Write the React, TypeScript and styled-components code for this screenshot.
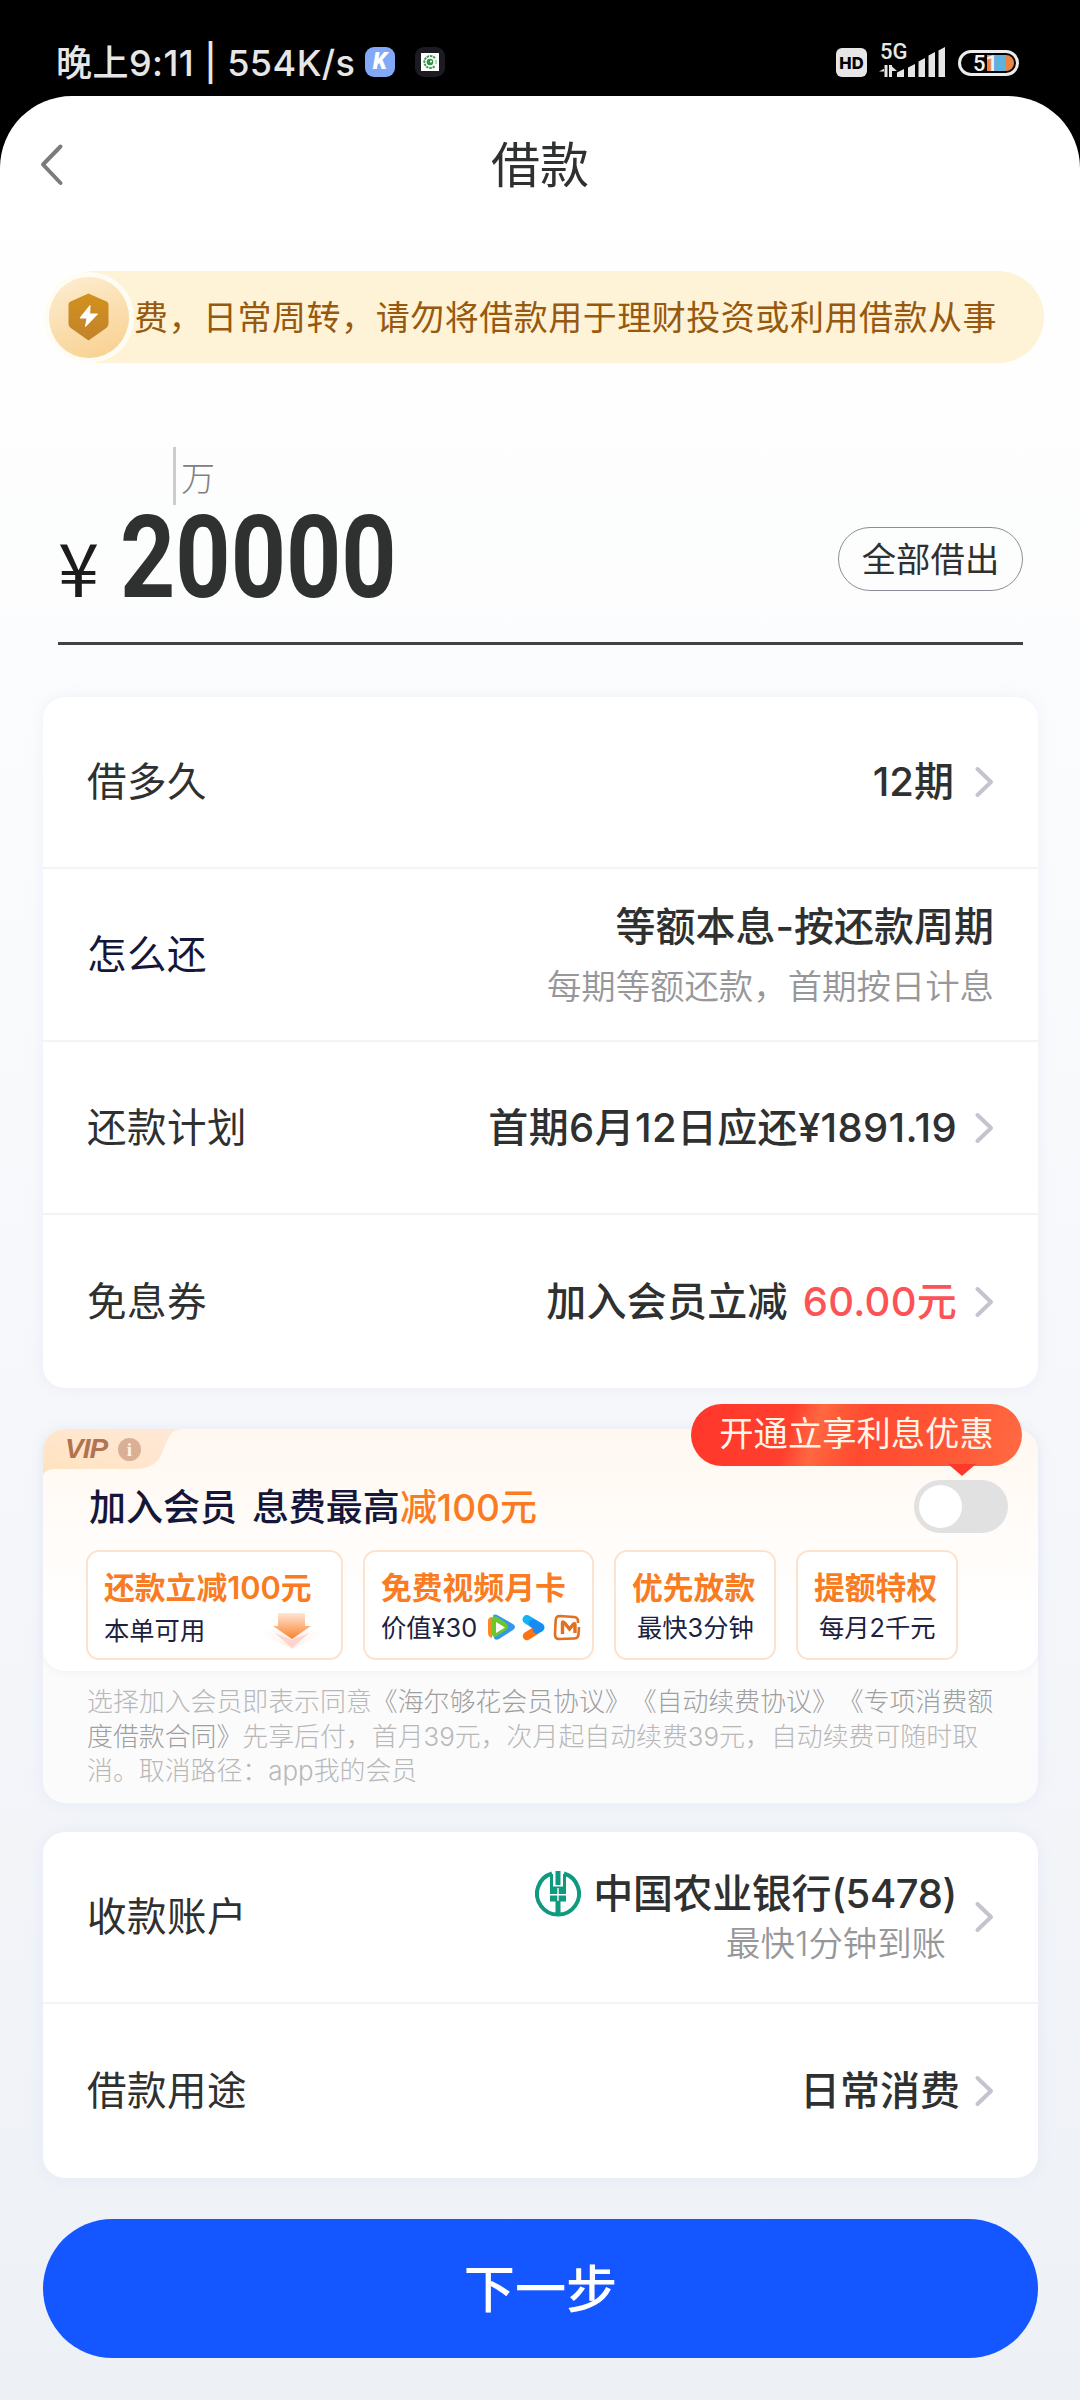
import React from 'react';
import styled, { createGlobalStyle } from 'styled-components';

const GlobalStyle = createGlobalStyle`
  * { box-sizing: border-box; }
  body {
    margin: 0;
    background: #000;
    font-family: Inter, "Noto Sans CJK SC", sans-serif;
    color: #2f3030;
    text-spacing-trim: space-all;
  }
`;

const Screen = styled.div`
  width: 1080px;
  height: 2400px;
  display: flex;
  flex-direction: column;
  overflow: hidden;
`;

const StatusBar = styled.div`
  height: 96px;
  flex: none;
  display: flex;
  align-items: center;
  justify-content: space-between;
  padding: 30px 61px 0 56px;
  color: #e6e6e6;
`;

const StatusGroup = styled.div<{ $gap: number }>`
  display: flex;
  align-items: center;
  gap: ${(p) => p.$gap}px;
`;

const Clock = styled.span`
  width: 299px;
  font-size: 36px;
  line-height: 44px;
  font-weight: 500;
  letter-spacing: 0.45px;
  white-space: pre;
  margin-right: 10px;
`;

const AppBadge = styled.span<{ $bg: string }>`
  width: 30px;
  height: 30px;
  margin-top: -2px;
  border-radius: 9px;
  background: ${(p) => p.$bg};
  display: flex;
  align-items: center;
  justify-content: center;
  color: #fff;
  font: italic 900 23px/30px Roboto, sans-serif;
`;

const HdBadge = styled.span`
  width: 31px;
  height: 29px;
  margin-top: -2px;
  border-radius: 6px;
  background: #e6e6e6;
  color: #000;
  font: 800 16.5px/30px Inter, sans-serif;
  text-align: center;
`;

const Network = styled.div`
  width: 67px;
  height: 40px;
  position: relative;
  margin-top: -7px;
`;

const NetworkLabel = styled.span`
  position: absolute;
  left: 1px;
  top: 0;
  font: 500 22px/24px Roboto, sans-serif;
`;

const Sheet = styled.main`
  flex: 1;
  border-radius: 72px 72px 0 0;
  background: linear-gradient(180deg, #ffffff 0%, #fefefe 12%, #fbfcfd 26%, #f7f8fb 52%, #f1f3f8 84%, #edf1f6 100%);
  display: flex;
  flex-direction: column;
`;

const Header = styled.header`
  height: 138px;
  display: grid;
  grid-template-columns: 108px 1fr 108px;
  align-items: center;
`;

const BackIcon = styled.svg`
  margin-left: 39px;
`;

const Title = styled.h1`
  margin: 2px 0 0;
  text-align: center;
  font-size: 49px;
  font-weight: 400;
  line-height: 60px;
`;

const Notice = styled.div`
  margin: 37px 36px 0 49px;
  height: 92px;
  border-radius: 46px;
  background: #fef3d6;
  display: flex;
  align-items: center;
  gap: 5px;
  color: #97590f;
  font-size: 34px;
  line-height: 50px;
  letter-spacing: 0.52px;
  white-space: nowrap;
`;

const NoticeText = styled.span`
  margin-top: 1px;
`;

const NoticeIcon = styled.div`
  width: 80px;
  height: 81px;
  flex: none;
  border-radius: 50%;
  background: linear-gradient(160deg, #fdeed3, #f8cf8c);
  box-shadow: 0 0 0 5px #fffcf4;
  display: flex;
  align-items: center;
  justify-content: center;
`;

const AmountSection = styled.section`
  margin: 84px 57px 0 58px;
  border-bottom: 3px solid #414145;
  height: 198px;
`;

const UnitHint = styled.div`
  margin-left: 115px;
  width: 60px;
  height: 58px;
  border-left: 3px solid #cccccc;
  padding: 12px 0 0 5px;
  font: 300 34px/36px "Noto Sans CJK SC", sans-serif;
  color: #808080;
`;

const AmountRow = styled.div`
  display: flex;
  justify-content: space-between;
`;

const Amount = styled.div`
  display: flex;
  align-items: baseline;
  line-height: 106px;
`;

const Currency = styled.span`
  width: 62px;
  font-family: "Noto Sans CJK SC", sans-serif;
  font-size: 74px;
  color: #1c1c1c;
`;

const Digits = styled.span`
  font-family: Roboto, sans-serif;
  font-size: 115.5px;
  font-weight: 700;
  transform: scaleX(0.835);
  transform-origin: left;
`;

const AllButton = styled.button`
  margin: 22px 0 0;
  width: 185px;
  height: 64px;
  border: 1.5px solid #8d8d97;
  border-radius: 32px;
  background: transparent;
  color: #2f3030;
  font: 400 34.4px/62px Inter, "Noto Sans CJK SC", sans-serif;
  padding: 1px 0 0;
`;

const Card = styled.section<{ $top: number }>`
  margin: ${(p) => p.$top}px 42px 0 43px;
  border-radius: 22px;
  background: #fff;
  box-shadow: 0 0 16px rgba(190, 205, 235, 0.22);
  flex: none;
`;

const Row = styled.div<{ $h: number }>`
  height: ${(p) => p.$h}px;
  display: flex;
  align-items: center;
  padding: 0 44px 0 44px;
  border-bottom: 2px solid #f3f4f6;
  &:last-child { border-bottom: 0; }
`;

const Label = styled.span<{ $color?: string }>`
  font-size: 39.5px;
  line-height: 56px;
  letter-spacing: 0.5px;
  color: ${(p) => p.$color || '#2f3030'};
`;

const Values = styled.div`
  margin-left: auto;
  display: flex;
  flex-direction: column;
  align-items: flex-end;
`;

const Value = styled.div<{ $ls?: number }>`
  display: flex;
  align-items: center;
  font-size: 40px;
  line-height: 56px;
  font-weight: 500;
  white-space: pre;
  letter-spacing: ${(p) => p.$ls || 0}px;
`;

const Red = styled.span`
  color: #fb5356;
  margin-left: 15px;
`;

const Sub = styled.div<{ $mr?: number; $mt?: number }>`
  font-size: 34.4px;
  line-height: 48px;
  color: #97979a;
  margin-top: ${(p) => p.$mt || 0}px;
  margin-right: ${(p) => p.$mr || 0}px;
  font-weight: 350;
`;

const ChevronIcon = styled.svg<{ $gap: number }>`
  margin-left: ${(p) => p.$gap}px;
  flex: none;
`;

const VipCard = styled(Card)`
  position: relative;
  height: 374px;
  background: #fbfbfc;
`;

const VipTop = styled.div`
  height: 242px;
  border-radius: 22px;
  background: linear-gradient(180deg, #fff8f1 0%, #fffdfb 55%, #ffffff 75%);
  box-shadow: 0 2px 6px rgba(200, 205, 220, 0.18);
  overflow: hidden;
`;

const VipTag = styled.div`
  position: relative;
  width: 144px;
  height: 46px;
  padding: 0 0 6px 22px;
  display: flex;
  align-items: center;
  gap: 9px;
`;

const TagShape = styled.svg`
  position: absolute;
  left: 0;
  top: 0;
`;

const VipText = styled.span`
  position: relative;
  width: 44px;
  color: #b27352;
  font: italic 800 28px/40px "Liberation Sans", sans-serif;
  letter-spacing: -1px;
`;

const Info = styled.span`
  position: relative;
  width: 23px;
  height: 23px;
  border-radius: 50%;
  background: #d9af96;
  color: #fff2e6;
  font: 700 19px/23px "Liberation Serif", serif;
  text-align: center;
`;

const VipHead = styled.div`
  display: flex;
  justify-content: space-between;
  align-items: center;
  height: 62px;
  padding: 2px 30px 0 46px;
`;

const VipTitle = styled.h2`
  margin: 2px 0 0;
  font-size: 37px;
  line-height: 50px;
  font-weight: 500;
  color: #14173a;
  white-space: pre;
  word-spacing: 5px;
`;

const Orange = styled.span`
  color: #f97c22;
`;

const Toggle = styled.div`
  width: 94px;
  height: 53px;
  margin-top: -1px;
  border-radius: 27px;
  background: #e1e1e1;
  padding: 5px;
`;

const Knob = styled.div`
  width: 43px;
  height: 43px;
  border-radius: 50%;
  background: #fff;
`;

const Benefits = styled.div`
  display: flex;
  gap: 20px;
  padding: 13px 0 0 43px;
`;

const Benefit = styled.div<{ $w: number }>`
  width: ${(p) => p.$w}px;
  height: 110px;
  border: 2px solid #fbe3d0;
  border-radius: 13px;
  background: #fff;
  padding: 15px 0 0 16px;
  white-space: nowrap;
`;

const BenefitTitle = styled.div`
  font-size: 30.8px;
  line-height: 42px;
  font-weight: 600;
  color: #f97c22;
`;

const BenefitSub = styled.div<{ $drop?: boolean; $indent?: number }>`
  display: flex;
  align-items: center;
  height: 36px;
  font-size: 25.3px;
  line-height: 36px;
  color: #1d2140;
  margin-top: ${(p) => (p.$drop ? 4 : 1)}px;
  padding-left: ${(p) => p.$indent || 0}px;
`;

const ArrowIcon = styled.svg`
  margin-left: 46px;
`;

const VideoIcons = styled.svg`
  margin-left: auto;
  margin-right: 9px;
`;

const Terms = styled.p`
  margin: 14px 0 0;
  padding: 0 0 0 44px;
  font-size: 25.9px;
  line-height: 34.6px;
  font-weight: 300;
  color: #b8b8b8;
  white-space: pre;
`;

const TermLink = styled.span`
  color: #9f9f9f;
`;

const Bubble = styled.div`
  position: absolute;
  right: 16px;
  top: -25px;
  width: 331px;
  height: 62px;
  border-radius: 31px;
  background: linear-gradient(105deg, #ff372b 0%, #ff3f2e 30%, #ff6840 38%, #ff5a37 44%, #ff4a31 52%, #ff5635 75%, #ff6b44 100%);
  color: #fff5e8;
  font-size: 34.3px;
  line-height: 60px;
  text-align: center;
  &::after {
    content: '';
    position: absolute;
    right: 46px;
    top: 60px;
    border: 14px solid transparent;
    border-top: 12px solid #fb3a2c;
    border-bottom: 0;
  }
`;

const BankLogo = styled.svg`
  margin-right: 12px;
`;

const NextButton = styled.button`
  margin: 41px 42px 0 43px;
  height: 139px;
  flex: none;
  border: 0;
  border-radius: 70px;
  background: #1456ff;
  color: #fff;
  font: 500 51.2px/138px Inter, "Noto Sans CJK SC", sans-serif;
  padding: 1px 0 0;
`;

const Chevron = ({ gap = 17 }: { gap?: number }) => (
  <ChevronIcon $gap={gap} width="20" height="34" viewBox="0 0 20 34" fill="none">
    <path d="M3.5 4 L17 17 L3.5 30" stroke="#c4c4cf" strokeWidth="4" strokeLinecap="round" strokeLinejoin="round" />
  </ChevronIcon>
);

const Status = () => (
  <StatusBar>
    <StatusGroup $gap={0}>
      <Clock>晚上9:11 | 554K/s</Clock>
      <StatusGroup $gap={20}>
        <AppBadge $bg="#82a8f8">K</AppBadge>
        <AppBadge $bg="#1c1b22">
          <svg width="18" height="18" viewBox="0 0 18 18">
            <rect width="18" height="18" fill="#fff" />
            <path d="M14 5.2A6 6 0 1 0 14 12.8" fill="none" stroke="#3d9a50" strokeWidth="2" strokeDasharray="2.4 0.8" />
            <circle cx="9" cy="9" r="3.3" fill="#2f9347" />
            <circle cx="10" cy="8.5" r="1.1" fill="#fff" />
            <path d="M15 7v4" stroke="#9dceaa" strokeWidth="1.5" />
          </svg>
        </AppBadge>
      </StatusGroup>
    </StatusGroup>
    <StatusGroup $gap={12}>
      <HdBadge>HD</HdBadge>
      <Network>
        <NetworkLabel>5G</NetworkLabel>
        <svg width="67" height="40" viewBox="0 0 67 40" fill="#e6e6e6">
          <path d="M5.5 25h3v12h-3zM0 31.5l6 0v-3.2l-6 3.2zM10 25h3v12h-3zM13 26.5l5 4.5h-5z" />
          <path d="M18 37v-4.500l7-3.500v8zM29 37v-9.500l7-3.500v13zM39.500 37v-15.500l6.500-3.500v19zM49.500 37v-21.500l6.500-3.500v25zM59.500 37v-26.500l6.500-3.500v30z" />
        </svg>
      </Network>
      <svg width="61" height="26" viewBox="0 0 61 26">
        <rect x="1.500" y="1.500" width="58" height="23" rx="11.500" fill="#000" stroke="#ececec" strokeWidth="3" />
        <path d="M29 5h19a8 8 0 0 1 0 16H29z" fill="#ec8440" />
        <rect x="33" y="5" width="15" height="16" fill="#5fb2dc" />
        <text x="15" y="21" fontFamily="Roboto" fontSize="22" fontWeight="500" fill="#f2f2f2">51</text>
      </svg>
    </StatusGroup>
  </StatusBar>
);

export default function App() {
  return (
    <Screen>
      <GlobalStyle />
      <Status />
      <Sheet>
        <Header>
          <BackIcon width="26" height="44" viewBox="0 0 26 44" fill="none">
            <path d="M21.500 3.500 L4 21.500 L21.500 40" stroke="#7b7b7b" strokeWidth="4" strokeLinecap="round" strokeLinejoin="round" />
          </BackIcon>
          <Title>借款</Title>
        </Header>

        <Notice>
          <NoticeIcon>
            <svg width="42" height="48" viewBox="0 0 42 48">
              <defs>
                <linearGradient id="shield" x1="0" y1="0" x2="0" y2="1">
                  <stop offset="0" stopColor="#d2921c" />
                  <stop offset="1" stopColor="#c2822c" />
                </linearGradient>
              </defs>
              <path d="M20.500 .5 38.500 8.500q2 1 2 3V30q0 3.500-3 5.500L20.500 47.500 3.500 35.500q-3-2-3-5.500V11.500q0-2 2-3z" fill="url(#shield)" />
              <path d="M22 12.500 12 25h7l-1.500 8.500L29.500 21h-7.800z" fill="#fff" stroke="#fff" strokeWidth="1" strokeLinejoin="round" />
            </svg>
          </NoticeIcon>
          <NoticeText>费，日常周转，请勿将借款用于理财投资或利用借款从事</NoticeText>
        </Notice>

        <AmountSection>
          <UnitHint>万</UnitHint>
          <AmountRow>
            <Amount>
              <Currency>¥</Currency>
              <Digits>20000</Digits>
            </Amount>
            <AllButton>全部借出</AllButton>
          </AmountRow>
        </AmountSection>

        <Card $top={52}>
          <Row $h={172}>
            <Label>借多久</Label>
            <Values><Value>12期<Chevron gap={20} /></Value></Values>
          </Row>
          <Row $h={173}>
            <Label $color="#14173a">怎么还</Label>
            <Values>
              <Value>等额本息-按还款周期</Value>
              <Sub $mt={8}>每期等额还款，首期按日计息</Sub>
            </Values>
          </Row>
          <Row $h={173}>
            <Label>还款计划</Label>
            <Values><Value $ls={0.35}>首期6月12日应还¥1891.19<Chevron /></Value></Values>
          </Row>
          <Row $h={173}>
            <Label>免息券</Label>
            <Values><Value $ls={0.25}>加入会员立减<Red>60.00元</Red><Chevron /></Value></Values>
          </Row>
        </Card>

        <VipCard $top={41}>
          <VipTop>
            <VipTag>
              <TagShape width="144" height="46" viewBox="0 0 144 46">
                <defs>
                  <linearGradient id="tag" x1="0" y1="1" x2="1" y2="0">
                    <stop offset="0" stopColor="#ffe3bf" />
                    <stop offset="1" stopColor="#ffe8d8" />
                  </linearGradient>
                </defs>
                <path d="M0 0H138Q128 1 124 12L119 24Q113 40 92 40H12Q2 40 0 46z" fill="url(#tag)" />
              </TagShape>
              <VipText>VIP</VipText>
              <Info>i</Info>
            </VipTag>
            <VipHead>
              <VipTitle>加入会员 <span>息费最高</span><Orange>减100元</Orange></VipTitle>
              <Toggle><Knob /></Toggle>
            </VipHead>
            <Benefits>
              <Benefit $w={257}>
                <BenefitTitle>还款立减100元</BenefitTitle>
                <BenefitSub $drop>
                  本单可用
                  <ArrowIcon width="82" height="40" viewBox="0 0 82 40">
                    <defs>
                      <linearGradient id="down" x1="0" y1="0" x2="0" y2="1">
                        <stop offset="0" stopColor="#ffe6d4" />
                        <stop offset="1" stopColor="#f9822f" />
                      </linearGradient>
                      <linearGradient id="glow" x1="0" y1="0" x2="1" y2="0">
                        <stop offset="0" stopColor="#fff" stopOpacity="0" />
                        <stop offset="0.5" stopColor="#fcc9b8" />
                        <stop offset="1" stopColor="#fff" stopOpacity="0" />
                      </linearGradient>
                    </defs>
                    <path d="M2 20H80L41 38z" fill="url(#glow)" opacity="0.350" />
                    <path d="M24 22 41 37 58 22 41 29z" fill="#fbc9c0" opacity="0.700" />
                    <path d="M27 2H54V15H60L41 28 22 15H27z" fill="url(#down)" />
                  </ArrowIcon>
                </BenefitSub>
              </Benefit>
              <Benefit $w={231}>
                <BenefitTitle>免费视频月卡</BenefitTitle>
                <BenefitSub>
                  价值¥30
                  <VideoIcons width="96" height="30" viewBox="0 0 96 30">
                    <path d="M6 2.500q2-2 5 0L26 11q4 3 0 6L12 26q-4 2-5-1z" fill="#3498e8" />
                    <path d="M5 4q-3 0-4 3v13q0 4 4 5z" fill="#fb8a24" />
                    <path d="M5 5q1-3 5-1l9 6q4 4 0 7l-9 6q-5 2-5-2z" fill="#6cc72e" />
                    <path d="M9 9v11l9-5.500z" fill="#fff" />
                    <path d="M40 6.500 53 14.500" stroke="#16b2f2" strokeWidth="9" strokeLinecap="round" />
                    <path d="M40 23 48 18" stroke="#fb7413" strokeWidth="8.500" strokeLinecap="round" />
                    <path d="M46 10.500 53 14.500 50 16.500" stroke="#178bf4" strokeWidth="8.500" strokeLinecap="round" strokeLinejoin="round" fill="none" />
                    <path d="M91 10V8q0-3.500-4-4L73 3q-4 0-4.300 4L68 21q0 5 4 5l15-.5q4 0 4.500-4L92 14" fill="none" stroke="#e36f20" strokeWidth="2.600" />
                    <path d="M75.500 21V10q0-2 2 0l5 6 4-5q1.500-1 1.500 1v8" fill="none" stroke="#e36f20" strokeWidth="3.400" />
                  </VideoIcons>
                </BenefitSub>
              </Benefit>
              <Benefit $w={162}>
                <BenefitTitle>优先放款</BenefitTitle>
                <BenefitSub $indent={5}>最快3分钟</BenefitSub>
              </Benefit>
              <Benefit $w={162}>
                <BenefitTitle>提额特权</BenefitTitle>
                <BenefitSub $indent={5}>每月2千元</BenefitSub>
              </Benefit>
            </Benefits>
          </VipTop>
          <Terms>
            选择加入会员即表示同意<TermLink>《海尔够花会员协议》《自动续费协议》《专项消费额{'\n'}度借款合同》</TermLink>先享后付，首月39元，次月起自动续费39元，自动续费可随时取{'\n'}消。取消路径：app我的会员
          </Terms>
          <Bubble>开通立享利息优惠</Bubble>
        </VipCard>

        <Card $top={29}>
          <Row $h={172}>
            <Label>收款账户</Label>
            <Values>
              <Value $ls={-0.35}>
                <BankLogo width="46" height="48" viewBox="1 0 46 48" fill="#0d9a7e">
                  <path d="M18 3.500A21 21 0 1 0 30 3.500" fill="none" stroke="#0d9a7e" strokeWidth="4" />
                  <path d="M21.500 1h5v14h-5zM16 4h3v12.500h10V4h3v14h-16z" />
                  <path d="M16 18h7.300v6h-7.300zM24.700 18h7.300v6h-7.300zM16 25.500h7.300v6h-7.300zM24.700 25.500h7.300v6h-7.300zM21.500 31h5v14h-5z" />
                </BankLogo>
                中国农业银行(5478)
              </Value>
              <Sub $mr={11} $mt={-2}>最快1分钟到账</Sub>
            </Values>
            <Chevron />
          </Row>
          <Row $h={174}>
            <Label>借款用途</Label>
            <Values><Value>日常消费<Chevron gap={14} /></Value></Values>
          </Row>
        </Card>

        <NextButton>下一步</NextButton>
      </Sheet>
    </Screen>
  );
}
